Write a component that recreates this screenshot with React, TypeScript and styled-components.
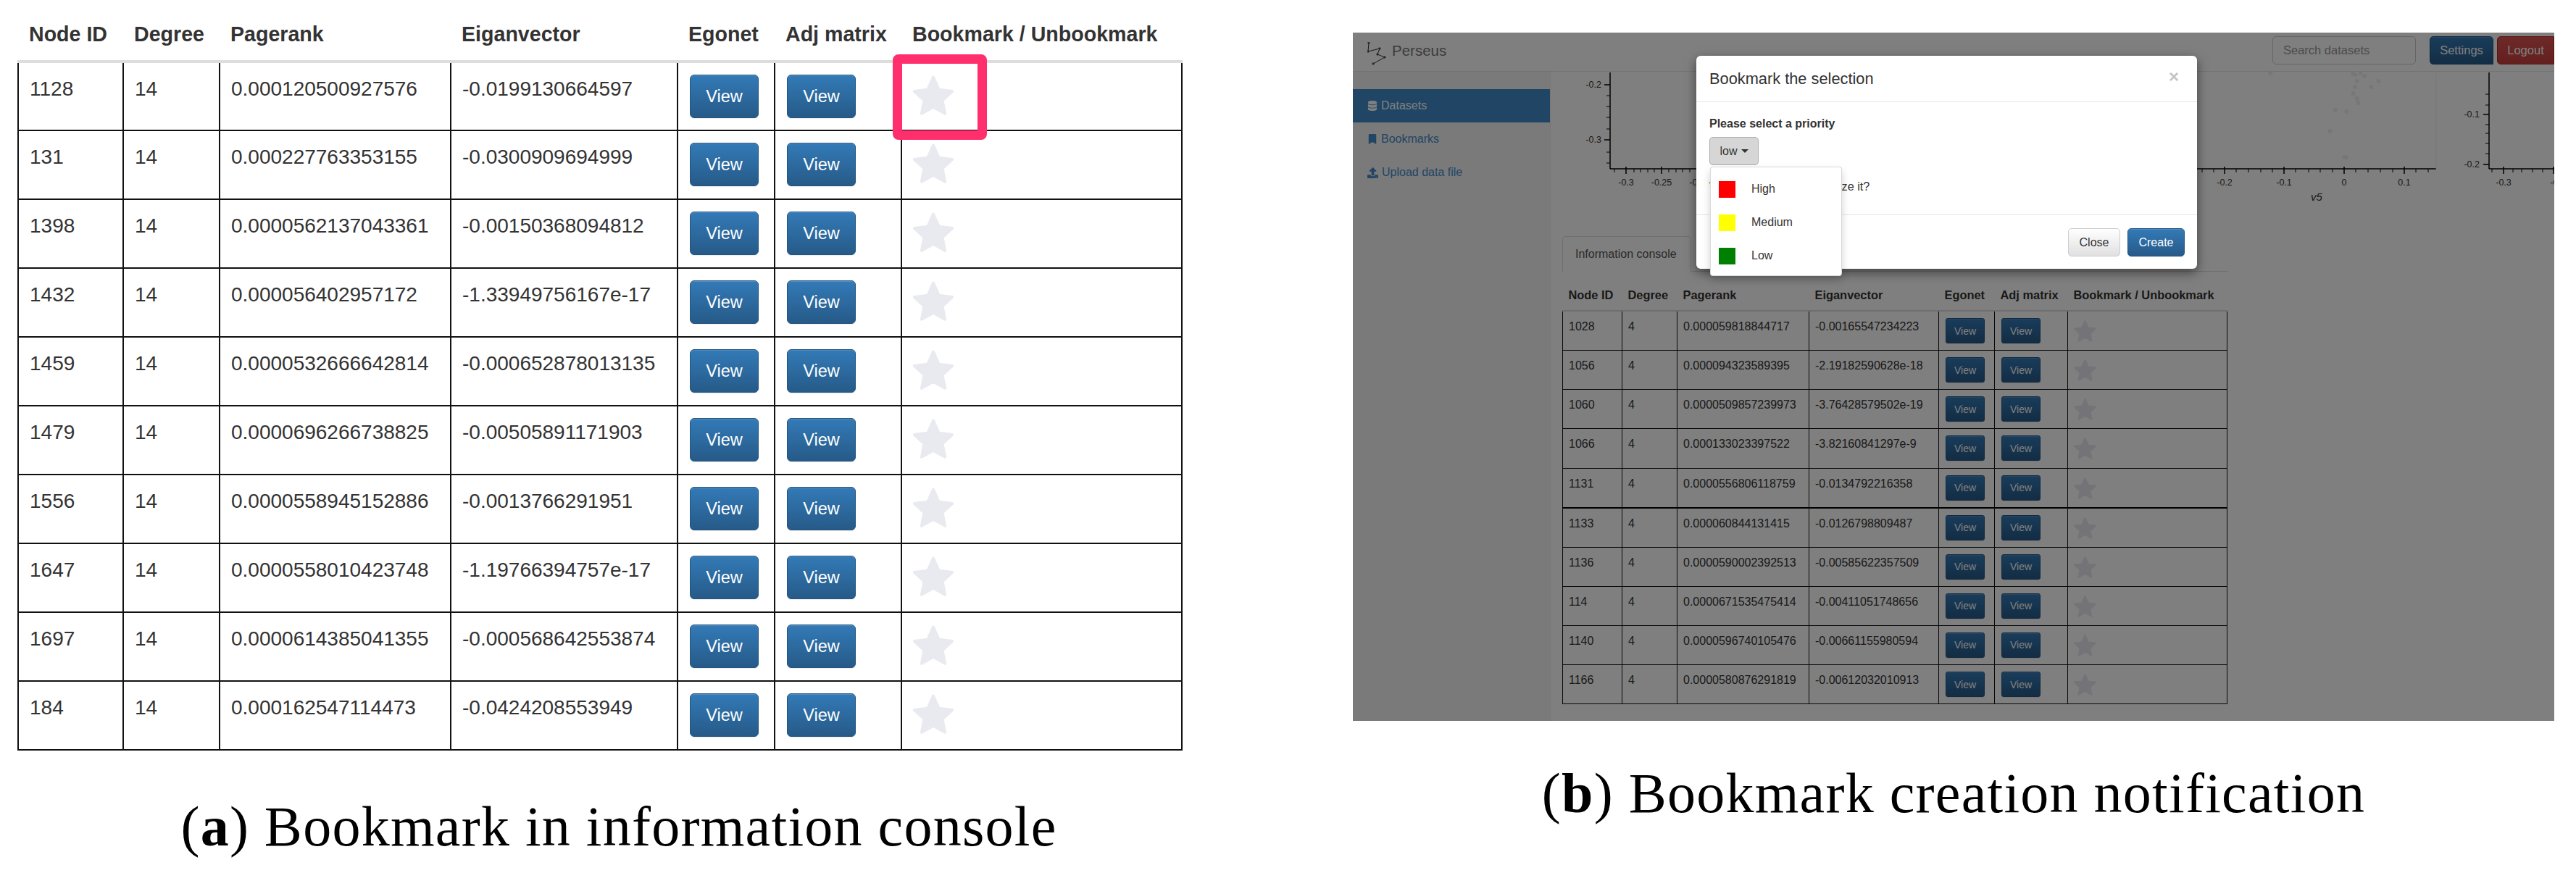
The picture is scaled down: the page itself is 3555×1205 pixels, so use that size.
import * as React from 'react';
import styled, { createGlobalStyle, css } from 'styled-components';
import { FaBookmark, FaDatabase, FaUpload } from 'react-icons/fa';

const GlobalStyle = createGlobalStyle`
    html, body {
        margin: 0;
        padding: 0;
        background: #fff;
    }
    body {
        font-family: "Liberation Sans", Arial, sans-serif;
        color: #333;
    }
`;

interface NodeRow {
    id: string;
    pagerank: string;
    eigen: string;
}

const CONSOLE_ROWS: NodeRow[] = [
    { id: '1128', pagerank: '0.000120500927576', eigen: '-0.0199130664597' },
    { id: '131', pagerank: '0.000227763353155', eigen: '-0.0300909694999' },
    { id: '1398', pagerank: '0.0000562137043361', eigen: '-0.00150368094812' },
    { id: '1432', pagerank: '0.000056402957172', eigen: '-1.33949756167e-17' },
    { id: '1459', pagerank: '0.0000532666642814', eigen: '-0.000652878013135' },
    { id: '1479', pagerank: '0.0000696266738825', eigen: '-0.00505891171903' },
    { id: '1556', pagerank: '0.0000558945152886', eigen: '-0.0013766291951' },
    { id: '1647', pagerank: '0.0000558010423748', eigen: '-1.19766394757e-17' },
    { id: '1697', pagerank: '0.0000614385041355', eigen: '-0.000568642553874' },
    { id: '184', pagerank: '0.000162547114473', eigen: '-0.0424208553949' },
];

const MODAL_ROWS: NodeRow[] = [
    { id: '1028', pagerank: '0.000059818844717', eigen: '-0.00165547234223' },
    { id: '1056', pagerank: '0.000094323589395', eigen: '-2.19182590628e-18' },
    { id: '1060', pagerank: '0.0000509857239973', eigen: '-3.76428579502e-19' },
    { id: '1066', pagerank: '0.000133023397522', eigen: '-3.82160841297e-9' },
    { id: '1131', pagerank: '0.0000556806118759', eigen: '-0.0134792216358' },
    { id: '1133', pagerank: '0.000060844131415', eigen: '-0.0126798809487' },
    { id: '1136', pagerank: '0.0000590002392513', eigen: '-0.00585622357509' },
    { id: '114', pagerank: '0.0000671535475414', eigen: '-0.00411051748656' },
    { id: '1140', pagerank: '0.0000596740105476', eigen: '-0.00661155980594' },
    { id: '1166', pagerank: '0.0000580876291819', eigen: '-0.00612032010913' },
];

const HEADERS = ['Node ID', 'Degree', 'Pagerank', 'Eiganvector', 'Egonet', 'Adj matrix', 'Bookmark / Unbookmark'];
const LARGE_WIDTHS = [145, 133, 319, 313, 134, 175, 387];
const COMPACT_WIDTHS = [82, 76, 182, 179, 77, 101, 220];

const Page = styled.div`
    width: 3555px;
    height: 1205px;
    display: grid;
    grid-template-columns: 1708px 1658px;
    column-gap: 159px;
    align-items: start;
    overflow: hidden;
`;

const LeftFigure = styled.figure`
    position: relative;
    margin: 0;
    padding-top: 11px;
`;

const RightFigure = styled.figure`
    margin: 0;
    padding-top: 45px;
`;

const Caption = styled.figcaption<{ $gap: number }>`
    margin-top: ${(p) => p.$gap}px;
    font-family: "Liberation Serif", "Times New Roman", serif;
    font-size: 78px;
    line-height: 90px;
    letter-spacing: 1.25px;
    color: #000;
    text-align: center;
    white-space: nowrap;

    b {
        font-weight: 700;
    }
`;

const Table = styled.table<{ $compact?: boolean }>`
    table-layout: fixed;
    border-collapse: collapse;
    width: ${(p) => (p.$compact ? 917 : 1605)}px;
    margin-left: ${(p) => (p.$compact ? 0 : 24)}px;
`;

const Column = styled.col<{ $w: number }>`
    width: ${(p) => p.$w}px;
`;

const HeadCell = styled.th<{ $compact?: boolean }>`
    text-align: left;
    vertical-align: bottom;
    font-weight: 700;
    white-space: nowrap;
    color: #333;
    ${(p) => p.$compact ? css`
        font-size: 16.4px;
        line-height: 23px;
        padding: 9px 8px;
        border-bottom: 2px solid #ddd;
    ` : css`
        font-size: 28.6px;
        line-height: 40px;
        padding: 16px 15px;
        border-bottom: 4px solid #ddd;
    `}
`;

const BodyRow = styled.tr<{ $compact?: boolean }>`
    height: ${(p) => (p.$compact ? 54.2 : 95)}px;
`;

const BodyCell = styled.td<{ $compact?: boolean; $heavyTop?: boolean }>`
    vertical-align: top;
    white-space: nowrap;
    color: #333;
    ${(p) => p.$compact ? css`
        font-size: 16px;
        line-height: 23px;
        padding: 9px 8px;
        border: 1px solid #111;
    ` : css`
        font-size: 28px;
        line-height: 40px;
        padding: 16px 15px;
        border: 2px solid #111;
    `}
    ${(p) => p.$heavyTop && css`
        border-top: 2px solid #000;
    `}
`;

const primaryGradient = css`
    background: linear-gradient(#337ab7, #265a88);
    border: 1px solid #245580;
    color: #fff;
    box-shadow: inset 0 1px 0 rgba(255, 255, 255, 0.15), 0 1px 1px rgba(0, 0, 0, 0.075);
`;

const ViewButton = styled.button<{ $compact?: boolean }>`
    ${primaryGradient}
    display: block;
    margin-left: 1px;
    padding: 0;
    font-family: inherit;
    ${(p) => p.$compact ? css`
        width: 54px;
        height: 35px;
        border-radius: 3px;
        font-size: 14px;
    ` : css`
        width: 95px;
        height: 60px;
        border-radius: 6px;
        font-size: 23.5px;
    `}
`;

const StarGlyph = styled.svg<{ $compact?: boolean }>`
    display: block;
    fill: #e9e9f0;
    stroke: #e9e9f0;
    stroke-width: 1.6;
    stroke-linejoin: round;
    ${(p) => p.$compact ? css`
        width: 33px;
        height: 32px;
        margin: 2px 0 0 -1px;
    ` : css`
        width: 60px;
        height: 58px;
        margin: 0 0 0 -2px;
    `}
`;

const Highlight = styled.div`
    position: absolute;
    left: 1232px;
    top: 75px;
    width: 130px;
    height: 118px;
    box-sizing: border-box;
    border: 13px solid #ff2f6e;
    border-radius: 8px;
`;

const Screen = styled.div`
    position: relative;
    width: 1658px;
    height: 950px;
    overflow: hidden;
    background: #fff;
    font-size: 16px;
`;

const NavBar = styled.header`
    display: flex;
    align-items: flex-start;
    box-sizing: border-box;
    height: 54px;
    padding-top: 5px;
    background: #fff;
    border-bottom: 1px solid #e7e7e7;
`;

const Logo = styled.svg`
    width: 26px;
    height: 33px;
    margin: 8px 0 0 20px;
    fill: none;
    stroke: #333;
    stroke-width: 1;
`;

const Brand = styled.span`
    margin: 6px auto 0 8px;
    font-size: 20.5px;
    line-height: 28px;
    color: #777;
`;

const SearchBox = styled.div`
    box-sizing: border-box;
    width: 198px;
    height: 39px;
    margin-right: 19px;
    padding-left: 14px;
    border: 1px solid #ccc;
    border-radius: 5px;
    font-size: 16.5px;
    line-height: 37px;
    color: #999;
`;

const NavButton = styled.button<{ $variant: 'primary' | 'danger' }>`
    box-sizing: border-box;
    height: 39px;
    padding: 0;
    border-radius: 5px 5px 0 5px;
    color: #fff;
    font-family: inherit;
    font-size: 16.5px;
    ${(p) => p.$variant === 'primary' ? css`
        ${primaryGradient}
        width: 88px;
        margin-right: 5px;
    ` : css`
        width: 79px;
        background: linear-gradient(#d9534f, #c9403c);
        border: 1px solid #b92c28;
        border-radius: 5px 0 0 5px;
    `}
`;

const Body = styled.div`
    display: flex;
    height: 896px;
`;

const Sidebar = styled.nav`
    box-sizing: border-box;
    flex: 0 0 273px;
    padding-top: 24px;
    background: #f5f5f5;
    border-right: 1px solid #eee;
`;

const SideItem = styled.div<{ $active?: boolean }>`
    display: flex;
    align-items: center;
    gap: 5px;
    height: 46px;
    padding-left: 20px;
    font-size: 16px;
    background: ${(p) => (p.$active ? '#428bca' : 'transparent')};
    color: ${(p) => (p.$active ? '#fff' : '#428bca')};
`;

const Main = styled.main`
    flex: 1;
    min-width: 0;
`;

const PlotCanvas = styled.svg`
    display: block;
    width: 1385px;
    height: 227px;
    font-family: "Liberation Sans", Arial, sans-serif;
    font-size: 12.5px;
`;

const ConsolePanel = styled.section`
    width: 918px;
    margin-left: 16px;
`;

const TabStrip = styled.div`
    height: 48px;
    border-bottom: 1px solid #ddd;
    margin-bottom: 12px;
`;

const Tab = styled.div`
    box-sizing: border-box;
    width: 178px;
    height: 49px;
    padding-left: 17px;
    background: #fff;
    border: 1px solid #ddd;
    border-bottom-color: #fff;
    border-radius: 5px 5px 0 0;
    font-size: 16px;
    line-height: 48px;
    color: #555;
`;

const Backdrop = styled.div`
    position: absolute;
    inset: 0;
    background: rgba(0, 0, 0, 0.5);
`;

const Modal = styled.div`
    position: absolute;
    left: 474px;
    top: 32px;
    width: 691px;
    height: 294px;
    display: flex;
    flex-direction: column;
    box-sizing: border-box;
    background: #fff;
    border-radius: 6px;
    box-shadow: 0 5px 15px rgba(0, 0, 0, 0.5);
`;

const ModalHeader = styled.div`
    display: flex;
    justify-content: space-between;
    align-items: center;
    box-sizing: border-box;
    flex: 0 0 64px;
    padding: 0 18px;
    border-bottom: 1px solid #e5e5e5;
`;

const ModalTitle = styled.h4`
    margin: 0;
    font-size: 21.8px;
    font-weight: 400;
    color: #333;
`;

const Dismiss = styled.span`
    font-size: 24px;
    font-weight: 700;
    line-height: 1;
    color: #c4c4c4;
    margin: -6px 7px 0 0;
`;

const ModalBody = styled.div`
    flex: 1;
    padding: 19px 18px 0;
`;

const FieldLabel = styled.div`
    font-size: 16px;
    font-weight: 700;
    line-height: 22px;
    color: #333;
`;

const Dropdown = styled.div`
    position: relative;
    width: 68px;
    margin-top: 7px;
`;

const DropdownToggle = styled.button`
    display: flex;
    align-items: center;
    justify-content: center;
    gap: 5px;
    box-sizing: border-box;
    width: 68px;
    height: 39px;
    padding: 0;
    background: #d6d6d6;
    border: 1px solid #adadad;
    border-radius: 5px;
    font-family: inherit;
    font-size: 16px;
    color: #333;
`;

const Caret = styled.i`
    width: 0;
    height: 0;
    border-top: 5px solid #333;
    border-left: 5px solid transparent;
    border-right: 5px solid transparent;
`;

const DropdownMenu = styled.div`
    position: absolute;
    left: 1px;
    top: 41px;
    z-index: 2;
    box-sizing: border-box;
    width: 182px;
    height: 151px;
    padding-top: 7px;
    background: #fff;
    border: 1px solid rgba(0, 0, 0, 0.15);
    border-radius: 4px;
    box-shadow: 0 6px 12px rgba(0, 0, 0, 0.175);
`;

const MenuItem = styled.div`
    display: flex;
    align-items: center;
    gap: 22px;
    height: 46px;
    padding-left: 11px;
    font-size: 16px;
    color: #333;
`;

const Swatch = styled.span<{ $color: string }>`
    width: 23px;
    height: 23px;
    background: ${(p) => p.$color};
`;

const Question = styled.p`
    margin: 18px 0 0;
    font-size: 16.3px;
    line-height: 22px;
    color: #333;
`;

const ModalFooter = styled.div`
    display: flex;
    justify-content: flex-end;
    gap: 10px;
    box-sizing: border-box;
    flex: 0 0 75px;
    padding: 18px 17px 0 0;
    border-top: 1px solid #e5e5e5;
`;

const FooterButton = styled.button<{ $primary?: boolean }>`
    box-sizing: border-box;
    height: 39px;
    padding: 0;
    border-radius: 5px;
    font-family: inherit;
    font-size: 16px;
    ${(p) => p.$primary ? css`
        ${primaryGradient}
        width: 79px;
    ` : css`
        width: 72px;
        background: linear-gradient(#fff, #e0e0e0);
        border: 1px solid #ccc;
        color: #333;
    `}
`;

const Star = ({ compact }: { compact?: boolean }) => (
    <StarGlyph $compact={compact} viewBox="0 0 24 24">
        <polygon points="12,1.5 15.2,8.6 22.8,9.5 17.2,14.7 18.7,22.3 12,18.5 5.3,22.3 6.8,14.7 1.2,9.5 8.8,8.6" />
    </StarGlyph>
);

const NodeTable = ({ rows, degree, compact, heavyRow }: { rows: NodeRow[]; degree: string; compact?: boolean; heavyRow?: string }) => {
    const widths = compact ? COMPACT_WIDTHS : LARGE_WIDTHS;
    return (
        <Table $compact={compact}>
            <colgroup>
                {widths.map((w, i) => <Column key={i} $w={w} />)}
            </colgroup>
            <thead>
                <tr>
                    {HEADERS.map((h) => <HeadCell key={h} $compact={compact}>{h}</HeadCell>)}
                </tr>
            </thead>
            <tbody>
                {rows.map((row) => {
                    const heavy = row.id === heavyRow;
                    return (
                        <BodyRow key={row.id} $compact={compact}>
                            <BodyCell $compact={compact} $heavyTop={heavy}>{row.id}</BodyCell>
                            <BodyCell $compact={compact} $heavyTop={heavy}>{degree}</BodyCell>
                            <BodyCell $compact={compact} $heavyTop={heavy}>{row.pagerank}</BodyCell>
                            <BodyCell $compact={compact} $heavyTop={heavy}>{row.eigen}</BodyCell>
                            <BodyCell $compact={compact} $heavyTop={heavy}><ViewButton $compact={compact}>View</ViewButton></BodyCell>
                            <BodyCell $compact={compact} $heavyTop={heavy}><ViewButton $compact={compact}>View</ViewButton></BodyCell>
                            <BodyCell $compact={compact} $heavyTop={heavy}><Star compact={compact} /></BodyCell>
                        </BodyRow>
                    );
                })}
            </tbody>
        </Table>
    );
};

const SCATTER = [
    [842, 212], [1040, 215], [1046, 220], [1058, 212], [1068, 225], [1050, 246], [1102, 246], [1045, 270],
    [1084, 270], [1041, 297], [1050, 318], [1053, 336], [998, 365], [1025, 371], [985, 453], [1020, 560], [1024, 562],
];

// drawn in page coordinates, the group below shifts them into the canvas
const Plots = () => {
    const vTicks = (x: number, ys: number[], majors: number[]) => (
        <>
            <line x1={x} y1={100} x2={x} y2={233} stroke="#000" strokeWidth={1.5} />
            {ys.map((y) => <line key={y} x1={x - 5} y1={y} x2={x} y2={y} stroke="#000" />)}
            {majors.map((y) => <line key={y} x1={x - 8} y1={y} x2={x} y2={y} stroke="#000" strokeWidth={1.5} />)}
        </>
    );
    const hTicks = (xs: number[], majors: number[]) => (
        <>
            {xs.map((x) => <line key={x} x1={x} y1={233} x2={x} y2={238} stroke="#000" />)}
            {majors.map((x) => <line key={x} x1={x} y1={230} x2={x} y2={240} stroke="#000" strokeWidth={1.5} />)}
        </>
    );
    const label = (x: number, text: string) => <text key={text + x} x={x} y={256} textAnchor="middle" fill="#333">{text}</text>;
    return (
        <PlotCanvas viewBox="0 0 1385 227">
            <g transform="translate(-2140 -99)">
                {vTicks(2222, [132, 147, 162, 178, 210, 225], [117, 193])}
                <line x1={2222} y1={233} x2={3362} y2={233} stroke="#000" strokeWidth={1.5} />
                {hTicks([2228, 2255, 2264, 2274, 2283, 2303, 2313, 2322, 2332, 3039, 3055, 3086, 3103, 3120, 3136, 3168, 3186, 3202, 3219, 3251, 3268, 3285, 3302, 3334, 3351], [2244, 2293, 3070, 3152, 3235, 3318])}
                <line x1={3362} y1={100} x2={3362} y2={233} stroke="#eee" />
                <text x={2210} y={121} textAnchor="end" fill="#333">-0.2</text>
                <text x={2210} y={197} textAnchor="end" fill="#333">-0.3</text>
                {label(2244, '-0.3')}
                {label(2293, '-0.25')}
                {label(2342, '-0.2')}
                {label(3070, '-0.2')}
                {label(3152, '-0.1')}
                {label(3235, '0')}
                {label(3318, '0.1')}
                <text x={3197} y={277} textAnchor="middle" fill="#333" fontStyle="italic" fontSize={15}>v5</text>
                {SCATTER.map(([zx, zy]) => (
                    <circle key={`${zx}-${zy}`} cx={2650 + zx / 1.742} cy={30 + zy / 3} r={3} fill="#eeeeee" />
                ))}
                {vTicks(3435, [130, 145, 172, 184, 198, 212], [158, 227])}
                <line x1={3435} y1={233} x2={3525} y2={233} stroke="#000" strokeWidth={1.5} />
                {hTicks([3439, 3468, 3480, 3495, 3509], [3455, 3524])}
                <text x={3422} y={162} textAnchor="end" fill="#333">-0.1</text>
                <text x={3422} y={231} textAnchor="end" fill="#333">-0.2</text>
                {label(3455, '-0.3')}
                {label(3530, '-0.2')}
            </g>
        </PlotCanvas>
    );
};

const PerseusLogo = () => (
    <Logo viewBox="0 0 26 33">
        <polyline points="2,1 1,13 17,9 14,17 24,21 8,30" />
        <circle cx={2} cy={1} r={1.2} />
        <circle cx={1} cy={13} r={1.2} />
        <circle cx={17} cy={9} r={1.2} />
        <circle cx={14} cy={17} r={1.2} />
        <circle cx={24} cy={21} r={1.2} />
        <circle cx={8} cy={30} r={1.2} />
    </Logo>
);

export default function App() {
    return (
        <>
            <GlobalStyle />
            <Page>
                <LeftFigure>
                    <NodeTable rows={CONSOLE_ROWS} degree="14" />
                    <Highlight />
                    <Caption $gap={60}>(<b>a</b>) Bookmark in information console</Caption>
                </LeftFigure>
                <RightFigure>
                    <Screen>
                        <NavBar>
                            <PerseusLogo />
                            <Brand>Perseus</Brand>
                            <SearchBox>Search datasets</SearchBox>
                            <NavButton $variant="primary">Settings</NavButton>
                            <NavButton $variant="danger">Logout</NavButton>
                        </NavBar>
                        <Body>
                            <Sidebar>
                                <SideItem $active><FaDatabase size={14} />Datasets</SideItem>
                                <SideItem><FaBookmark size={14} />Bookmarks</SideItem>
                                <SideItem><FaUpload size={15} />Upload data file</SideItem>
                            </Sidebar>
                            <Main>
                                <Plots />
                                <ConsolePanel>
                                    <TabStrip><Tab>Information console</Tab></TabStrip>
                                    <NodeTable rows={MODAL_ROWS} degree="4" compact heavyRow="1133" />
                                </ConsolePanel>
                            </Main>
                        </Body>
                        <Backdrop />
                        <Modal>
                            <ModalHeader>
                                <ModalTitle>Bookmark the selection</ModalTitle>
                                <Dismiss>×</Dismiss>
                            </ModalHeader>
                            <ModalBody>
                                <FieldLabel>Please select a priority</FieldLabel>
                                <Dropdown>
                                    <DropdownToggle>low<Caret /></DropdownToggle>
                                    <DropdownMenu>
                                        <MenuItem><Swatch $color="#ff0000" />High</MenuItem>
                                        <MenuItem><Swatch $color="#ffff00" />Medium</MenuItem>
                                        <MenuItem><Swatch $color="#008000" />Low</MenuItem>
                                    </DropdownMenu>
                                </Dropdown>
                                <Question>Would you want to prioritize it?</Question>
                            </ModalBody>
                            <ModalFooter>
                                <FooterButton>Close</FooterButton>
                                <FooterButton $primary>Create</FooterButton>
                            </ModalFooter>
                        </Modal>
                    </Screen>
                    <Caption $gap={55}>(<b>b</b>) Bookmark creation notification</Caption>
                </RightFigure>
            </Page>
        </>
    );
}
